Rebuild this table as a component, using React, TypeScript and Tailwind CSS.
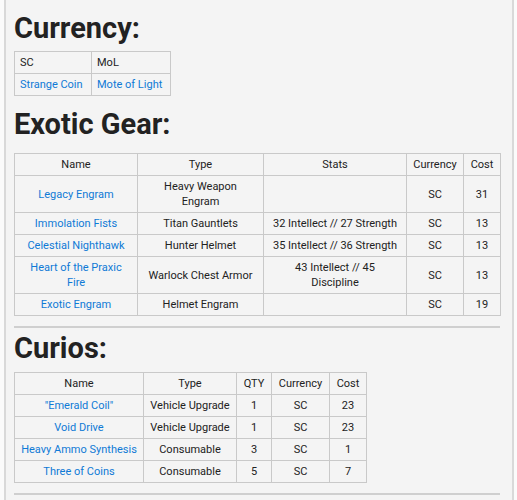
import React from "react";

const A = ({ children }: { children: React.ReactNode }) => (
  <a className="text-[#0f7ad6]">{children}</a>
);

const td = "border border-[#c9c9c9] px-[5px] py-[3px] align-middle whitespace-nowrap";

export default function App() {
  return (
    <div className="h-[500px] w-[517px] bg-[#fbfbfb] font-['Roboto',sans-serif] text-[11px] leading-[15px] text-[#222]">
      <div className="ml-[4px] mr-[3px] h-full overflow-hidden border-x-2 border-[#d9d9d9] bg-[#f4f4f4] pl-[8px] pr-[10px]">
        <h1 className="mt-[11px] text-[29px] font-bold leading-[34px] text-[#222]">Currency:</h1>
        <table className="mt-[6px] w-[156px] table-fixed border-collapse">
          <tbody>
            <tr className="h-[22px]">
              <td className={`${td} w-[77px]`}>SC</td>
              <td className={`${td} w-[79px]`}>MoL</td>
            </tr>
            <tr className="h-[22px]">
              <td className={td}><A>Strange Coin</A></td>
              <td className={td}><A>Mote of Light</A></td>
            </tr>
          </tbody>
        </table>
        <h1 className="mt-[11px] text-[29px] font-bold leading-[34px] text-[#222]">Exotic Gear:</h1>
        <table className="mt-[12px] w-[486px] table-fixed border-collapse text-center">
          <thead>
            <tr className="h-[22px]">
              <th className={`${td} w-[123px] font-normal`}>Name</th>
              <th className={`${td} w-[126px] font-normal`}>Type</th>
              <th className={`${td} w-[143px] font-normal`}>Stats</th>
              <th className={`${td} w-[57px] font-normal`}>Currency</th>
              <th className={`${td} w-[37px] font-normal`}>Cost</th>
            </tr>
          </thead>
          <tbody>
            <tr className="h-[37px]">
              <td className={td}><A>Legacy Engram</A></td>
              <td className={td}>Heavy Weapon<br />Engram</td>
              <td className={td}></td>
              <td className={td}>SC</td>
              <td className={td}>31</td>
            </tr>
            <tr className="h-[22px]">
              <td className={td}><A>Immolation Fists</A></td>
              <td className={td}>Titan Gauntlets</td>
              <td className={td}>32 Intellect // 27 Strength</td>
              <td className={td}>SC</td>
              <td className={td}>13</td>
            </tr>
            <tr className="h-[22px]">
              <td className={td}><A>Celestial Nighthawk</A></td>
              <td className={td}>Hunter Helmet</td>
              <td className={td}>35 Intellect // 36 Strength</td>
              <td className={td}>SC</td>
              <td className={td}>13</td>
            </tr>
            <tr className="h-[37px]">
              <td className={td}><A>Heart of the Praxic<br />Fire</A></td>
              <td className={td}>Warlock Chest Armor</td>
              <td className={td}>43 Intellect // 45<br />Discipline</td>
              <td className={td}>SC</td>
              <td className={td}>13</td>
            </tr>
            <tr className="h-[22px]">
              <td className={td}><A>Exotic Engram</A></td>
              <td className={td}>Helmet Engram</td>
              <td className={td}></td>
              <td className={td}>SC</td>
              <td className={td}>19</td>
            </tr>
          </tbody>
        </table>
        <div className="mt-[10px] h-[2px] w-[486px] bg-[#cfcfcf]" />
        <h1 className="mt-[3px] text-[29px] font-bold leading-[34px] text-[#222]">Curios:</h1>
        <table className="mt-[7px] w-[352px] table-fixed border-collapse text-center">
          <thead>
            <tr className="h-[22px]">
              <th className={`${td} w-[129px] font-normal`}>Name</th>
              <th className={`${td} w-[93px] font-normal`}>Type</th>
              <th className={`${td} w-[35px] font-normal`}>QTY</th>
              <th className={`${td} w-[58px] font-normal`}>Currency</th>
              <th className={`${td} w-[37px] font-normal`}>Cost</th>
            </tr>
          </thead>
          <tbody>
            <tr className="h-[22px]">
              <td className={td}><A>"Emerald Coil"</A></td>
              <td className={td}>Vehicle Upgrade</td>
              <td className={td}>1</td>
              <td className={td}>SC</td>
              <td className={td}>23</td>
            </tr>
            <tr className="h-[21px]">
              <td className={td}><A>Void Drive</A></td>
              <td className={td}>Vehicle Upgrade</td>
              <td className={td}>1</td>
              <td className={td}>SC</td>
              <td className={td}>23</td>
            </tr>
            <tr className="h-[22px]">
              <td className={td}><A>Heavy Ammo Synthesis</A></td>
              <td className={td}>Consumable</td>
              <td className={td}>3</td>
              <td className={td}>SC</td>
              <td className={td}>1</td>
            </tr>
            <tr className="h-[22px]">
              <td className={td}><A>Three of Coins</A></td>
              <td className={td}>Consumable</td>
              <td className={td}>5</td>
              <td className={td}>SC</td>
              <td className={td}>7</td>
            </tr>
          </tbody>
        </table>
        <div className="mt-[10px] h-[2px] w-[486px] bg-[#cfcfcf]" />
      </div>
    </div>
  );
}
